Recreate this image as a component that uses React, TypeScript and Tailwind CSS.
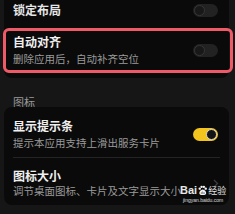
import React from "react";

const font = { fontFamily: '"Noto Sans CJK SC", "Noto Sans", sans-serif' };

function ToggleOff() {
  return (
    <div className="w-[25px] h-[13px] rounded-full bg-[#222222] flex items-center pl-[1px] shrink-0">
      <div className="w-[11px] h-[11px] rounded-full bg-[#181818] border border-[#363636]" />
    </div>
  );
}

function ToggleOn() {
  return (
    <div className="w-[25px] h-[13px] rounded-full bg-[#f2c41d] flex items-center justify-end pr-[1px] shrink-0">
      <div className="w-[11px] h-[11px] rounded-full bg-[#141414] border border-[#d8d8d8]" />
    </div>
  );
}

export default function App() {
  return (
    <div
      className="relative w-[235px] h-[214px] bg-[#161616] overflow-hidden flex flex-col pl-[4px] pr-[6px]"
      style={font}
    >
      {/* top card */}
      <div className="h-[78px] bg-[#0a0a0a] rounded-b-[8px] flex flex-col">
        <div className="h-[20px] flex items-center justify-between pl-[9px] pr-[11px]">
          <span className="text-[12px] leading-[14px] font-bold text-[#e6e6e6]">锁定布局</span>
          <ToggleOff />
        </div>
        <div className="relative mt-[8px] h-[45px] flex items-center justify-between pl-[9px] pr-[11px]">
          <div className="flex flex-col">
            <span className="text-[12px] leading-[14px] font-bold text-[#f0f0f0]">自动对齐</span>
            <span className="mt-[3px] text-[10.5px] leading-[14px] text-[#9a9a9a]">删除应用后，自动补齐空位</span>
          </div>
          <ToggleOff />
          <div className="absolute left-[-1px] right-[-4px] top-0 bottom-0 border-[3.5px] border-[#ee5a67] rounded-[6px]" />
        </div>
      </div>

      {/* section label */}
      <div className="h-[29px] pt-[10px] pl-[9px]">
        <span className="text-[11px] leading-[14px] text-[#9a9a9a]">图标</span>
      </div>

      {/* second card */}
      <div className="h-[98px] bg-[#0a0a0a] rounded-[8px] flex flex-col pt-[12px]">
        <div className="flex items-center justify-between pl-[9px] pr-[11px] pb-[7px]">
          <div className="flex flex-col">
            <span className="text-[12px] leading-[14px] font-bold text-[#f0f0f0]">显示提示条</span>
            <span className="mt-[3px] text-[10.5px] leading-[14px] text-[#9a9a9a]">提示本应用支持上滑出服务卡片</span>
          </div>
          <ToggleOn />
        </div>
        <div className="h-px mx-[9px] bg-[#242424]" />
        <div className="flex items-center justify-between pl-[9px] pr-[10px] pt-[11px]">
          <div className="flex flex-col">
            <span className="text-[12px] leading-[14px] font-bold text-[#f0f0f0]">图标大小</span>
            <span className="mt-[1px] text-[10.5px] leading-[14px] text-[#9a9a9a] whitespace-nowrap">调节桌面图标、卡片及文字显示大小</span>
          </div>
          <svg width="6" height="9" viewBox="0 0 6 9" className="shrink-0">
            <path d="M1 1 L4.5 4.5 L1 8" stroke="#3c3c3c" strokeWidth="1.3" fill="none" />
          </svg>
        </div>
      </div>

      {/* watermark */}
      <div className="absolute left-[180px] top-[184px] flex flex-col items-center">
        <div className="flex items-end">
          <span
            className="text-[11px] leading-[12px] font-bold text-white/90"
            style={{ fontFamily: '"Liberation Sans", sans-serif' }}
          >
            Bai
          </span>
          <svg width="11" height="11" viewBox="0 0 12 12">
            <circle cx="3" cy="4" r="1.3" fill="#f4f4f4" />
            <circle cx="5" cy="2" r="1.3" fill="#f4f4f4" />
            <circle cx="7.5" cy="2" r="1.3" fill="#f4f4f4" />
            <circle cx="9.5" cy="4" r="1.3" fill="#f4f4f4" />
            <path d="M6.2 5 C4 5 2.5 7.5 2.5 9 C2.5 10.5 4 11 6.2 11 C8.5 11 10 10.5 10 9 C10 7.5 8.5 5 6.2 5 Z" fill="#f4f4f4" />
            <text x="6.2" y="10" fontSize="4" textAnchor="middle" fill="#333" fontFamily="Liberation Sans">du</text>
          </svg>
          <span className="text-[9px] leading-[11px] text-white/90">经验</span>
        </div>
        <span
          className="text-[5px] leading-[7px] text-white/80 mt-[1px]"
          style={{ fontFamily: '"Liberation Sans", sans-serif' }}
        >
          jingyan.baidu.com
        </span>
      </div>
    </div>
  );
}
